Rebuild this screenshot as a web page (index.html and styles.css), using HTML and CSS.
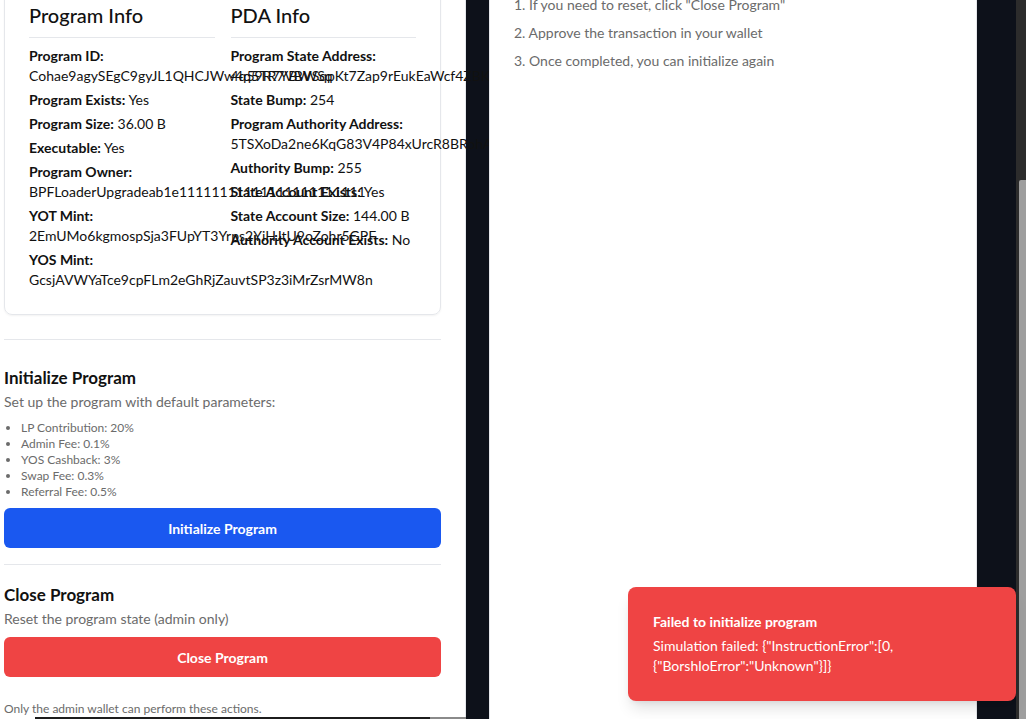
FILE: index.html
```html
<!DOCTYPE html>
<html lang="en">
<head>
<meta charset="utf-8">
<title>Program Admin</title>
<link rel="stylesheet" href="styles.css">
</head>
<body>
<div class="app">
  <main class="admin">
    <div class="admin-inner">
      <section class="card">
        <div class="col">
          <h2 class="col-title">Program Info</h2>
          <div class="items">
            <div class="item"><p class="label">Program ID:</p><p class="addr">Cohae9agySEgC9gyJL1QHCJWw4q5TR7VBWSq</p></div>
            <div class="item"><p><span class="label">Program Exists:</span> Yes</p></div>
            <div class="item"><p><span class="label">Program Size:</span> 36.00 B</p></div>
            <div class="item"><p><span class="label">Executable:</span> Yes</p></div>
            <div class="item"><p class="label">Program Owner:</p><p class="addr">BPFLoaderUpgradeab1e11111111111111111111111</p></div>
            <div class="item"><p class="label">YOT Mint:</p><p class="addr">2EmUMo6kgmospSja3FUpYT3Yrps2YiHJtU9oZohr5GPF</p></div>
            <div class="item"><p class="label">YOS Mint:</p><p class="addr">GcsjAVWYaTce9cpFLm2eGhRjZauvtSP3z3iMrZsrMW8n</p></div>
          </div>
        </div>
        <div class="col">
          <h2 class="col-title">PDA Info</h2>
          <div class="items">
            <div class="item"><p class="label">Program State Address:</p><p class="addr">4q59R7YBWSqpKt7Zap9rEukEaWcf4ZBKF7Hx</p></div>
            <div class="item"><p><span class="label">State Bump:</span> 254</p></div>
            <div class="item"><p class="label">Program Authority Address:</p><p class="addr">5TSXoDa2ne6KqG83V4P84xUrcR8BRohAFq2N</p></div>
            <div class="item"><p><span class="label">Authority Bump:</span> 255</p></div>
            <div class="item"><p><span class="label">State Account Exists:</span> Yes</p></div>
            <div class="item"><p><span class="label">State Account Size:</span> 144.00 B</p></div>
            <div class="item"><p><span class="label">Authority Account Exists:</span> No</p></div>
          </div>
        </div>
      </section>

      <section class="action action-init">
        <h3 class="action-title">Initialize Program</h3>
        <p class="action-desc">Set up the program with default parameters:</p>
        <ul class="params">
          <li>LP Contribution: 20%</li>
          <li>Admin Fee: 0.1%</li>
          <li>YOS Cashback: 3%</li>
          <li>Swap Fee: 0.3%</li>
          <li>Referral Fee: 0.5%</li>
        </ul>
        <button class="btn btn-blue" type="button">Initialize Program</button>
      </section>

      <section class="action action-close">
        <h3 class="action-title">Close Program</h3>
        <p class="action-desc">Reset the program state (admin only)</p>
        <button class="btn btn-red" type="button">Close Program</button>
      </section>

      <p class="note">Only the admin wallet can perform these actions.</p>
    </div>
  </main>

  <aside class="guide">
    <div class="guide-inner">
      <p>1. If you need to reset, click "Close Program"</p>
      <p>2. Approve the transaction in your wallet</p>
      <p>3. Once completed, you can initialize again</p>
    </div>
  </aside>

  <div class="vscroll"><div class="vthumb"></div></div>
</div>

<div class="hscroll"><div class="hthumb"></div></div>

<div class="toast" role="alert">
  <p class="toast-title">Failed to initialize program</p>
  <p class="toast-msg">Simulation failed: {"InstructionError":[0,<br>{"BorshIoError":"Unknown"}]}</p>
</div>
</body>
</html>
```

FILE: styles.css
```css
* { box-sizing: border-box; }
html, body { margin: 0; padding: 0; }
body {
  width: 1026px;
  height: 719px;
  overflow: hidden;
  background: #0d111a;
  font-family: Lato, "Noto Sans", sans-serif;
  color: #111;
  position: relative;
}
p, h2, h3, ul { margin: 0; }

.app {
  display: flex;
  height: 719px;
}

.admin {
  width: 466px;
  flex: none;
  background: #fff;
  border-right: 1px solid #e5e7eb;
}
.admin-inner {
  width: 437px;
  margin: -24px 0 0 4px;
}

.card {
  border: 1px solid #e5e7eb;
  border-radius: 8px;
  padding: 24px;
  display: grid;
  grid-template-columns: repeat(2, minmax(0, 1fr));
  column-gap: 16px;
  box-shadow: 0 1px 2px rgba(0, 0, 0, 0.05);
}
.col-title {
  font-size: 20px;
  line-height: 28px;
  font-weight: 500;
  color: #111;
  padding-bottom: 8px;
  border-bottom: 1px solid #e5e7eb;
  margin-bottom: 8px;
}
.items {
  display: flex;
  flex-direction: column;
  gap: 4px;
  font-size: 14px;
  line-height: 20px;
}
.items p { white-space: nowrap; }
.label { font-weight: 700; }

.action { border-top: 1px solid #e5e7eb; }
.action-init { margin-top: 24px; padding-top: 24px; }
.action-close { margin-top: 16px; padding-top: 16px; }
.action-title {
  font-size: 17px;
  line-height: 28px;
  font-weight: 700;
  color: #111;
}
.action-desc {
  font-size: 14px;
  line-height: 20px;
  color: #6b6b6b;
}
.params {
  margin: 8px 0 0;
  padding-left: 17px;
  font-size: 12px;
  line-height: 16px;
  color: #6b6b6b;
}
.btn {
  display: block;
  width: 100%;
  height: 40px;
  margin-top: 8px;
  border: none;
  border-radius: 6px;
  font-family: inherit;
  font-size: 14px;
  font-weight: 700;
  color: #fff;
}
.btn-blue { background: #1a58f0; }
.btn-red { background: #ef4444; }

.note {
  margin-top: 24px;
  font-size: 12px;
  line-height: 16px;
  color: #6b6b6b;
}

.guide {
  position: relative;
  width: 488px;
  flex: none;
  margin-left: 23px;
  background: #fff;
  border-left: 1px solid #e5e7eb;
  border-right: 1px solid #e5e7eb;
}
.guide-inner {
  margin-top: -5px;
  padding: 0 24px;
  font-size: 14px;
  line-height: 20px;
  color: #6b6b6b;
  display: flex;
  flex-direction: column;
  gap: 8px;
}

.vscroll {
  margin-left: auto;
  width: 10px;
  flex: none;
  background: #2c2c2c;
  padding-top: 180px;
  padding-left: 3px;
}
.vthumb {
  height: 539px;
  background: #9e9e9e;
  border-radius: 2px 0 0 0;
}

.hscroll {
  position: absolute;
  left: 35px;
  bottom: 0;
  width: 431px;
  height: 2px;
  background: #1c1c1c;
}
.hthumb {
  margin-left: 395px;
  width: 36px;
  height: 2px;
  background: #8a8a8a;
}

.toast {
  position: absolute;
  right: 10px;
  bottom: 18px;
  width: 388px;
  padding: 25px;
  background: #ef4444;
  border-radius: 8px;
  color: #fff;
  box-shadow: 0 10px 15px -3px rgba(0, 0, 0, 0.12), 0 4px 6px -4px rgba(0, 0, 0, 0.1);
}
.toast-title {
  font-size: 14px;
  line-height: 20px;
  font-weight: 700;
  margin-bottom: 4px;
}
.toast-msg {
  font-size: 14px;
  line-height: 20px;
}
```
